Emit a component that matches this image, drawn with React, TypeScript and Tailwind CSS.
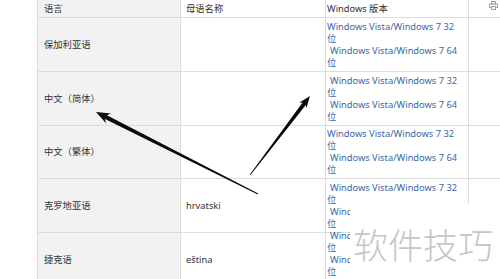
import React from "react";

type Pt = [number, number];

// Tapered arrow: thin at the tail, widening toward a solid head.
function arrowPoints(tail: Pt, tip: Pt, tailW: number, neckW: number, headLen: number, headW: number): string {
  const dx = tip[0] - tail[0];
  const dy = tip[1] - tail[1];
  const len = Math.hypot(dx, dy);
  const ux = dx / len;
  const uy = dy / len;
  const nx = -uy;
  const ny = ux;
  const bx = tip[0] - ux * headLen;
  const by = tip[1] - uy * headLen;
  const nbx = tip[0] - ux * headLen * 0.8;
  const nby = tip[1] - uy * headLen * 0.8;
  const p = (x: number, y: number) => `${x.toFixed(1)},${y.toFixed(1)}`;
  return [
    p(tail[0] + nx * tailW / 2, tail[1] + ny * tailW / 2),
    p(nbx + nx * neckW / 2, nby + ny * neckW / 2),
    p(bx + nx * headW / 2, by + ny * headW / 2),
    p(tip[0], tip[1]),
    p(bx - nx * headW / 2, by - ny * headW / 2),
    p(nbx - nx * neckW / 2, nby - ny * neckW / 2),
    p(tail[0] - nx * tailW / 2, tail[1] - ny * tailW / 2),
  ].join(" ");
}

const font = "font-['Noto_Sans','Noto_Sans_CJK_SC',sans-serif]";

type Row = {
  lang: string;
  native: string;
  versions: { text: string; indent?: boolean }[];
  h: string;
};

const W32 = "Windows Vista/Windows 7 32";
const W64 = "Windows Vista/Windows 7 64";

const rows: Row[] = [
  {
    lang: "保加利亚语",
    native: "",
    h: "h-[54px]",
    versions: [{ text: W32 }, { text: "位" }, { text: W64, indent: true }, { text: "位" }],
  },
  {
    lang: "中文（简体）",
    native: "",
    h: "h-[54px]",
    versions: [{ text: W32, indent: true }, { text: "位" }, { text: W64, indent: true }, { text: "位" }],
  },
  {
    lang: "中文（繁体）",
    native: "",
    h: "h-[53px]",
    versions: [{ text: W32 }, { text: "位" }, { text: W64, indent: true }, { text: "位" }],
  },
  {
    lang: "克罗地亚语",
    native: "hrvatski",
    h: "h-[54px]",
    versions: [{ text: W32, indent: true }, { text: "位" }, { text: W64, indent: true }, { text: "位" }],
  },
  {
    lang: "捷克语",
    native: "eština",
    h: "h-[54px]",
    versions: [
      { text: W32, indent: true },
      { text: "位" },
      { text: W64, indent: true },
      { text: "位" },
      { text: "Windows 8" },
    ],
  },
];

export default function App() {
  return (
    <div className={`relative w-[500px] h-[279px] overflow-hidden bg-white ${font} text-[9.3px] text-[#333]`}>
      <div className="pl-[37px]">
        {/* header row */}
        <div className="flex h-[18px] border-b border-[#dcdcdc]">
          <div className="w-[143px] bg-[#f2f2f2] border-l border-[#dcdcdc] pl-[6px] flex items-center">
            <div className="h-[12px] leading-[12px]">语言</div>
          </div>
          <div className="w-[145px] border-l border-[#dcdcdc] pl-[5px] flex items-center">
            <div className="h-[12px] leading-[12px]">母语名称</div>
          </div>
          <div className="w-[144px] border-l border-r border-[#dcdcdc] pl-[1px] flex items-center">
            <div className="h-[12px] leading-[12px]">Windows 版本</div>
          </div>
        </div>
        {rows.map((r, i) => (
          <div key={i} className={`flex ${r.h} border-b border-[#dcdcdc]`}>
            <div className="w-[143px] bg-[#f2f2f2] border-l border-[#dcdcdc] pl-[6px] flex items-center">
              <div className="h-[12px] leading-[12px]">{r.lang}</div>
            </div>
            <div className="w-[145px] border-l border-[#dcdcdc] pl-[5px] flex items-center">
              <div className="h-[12px] leading-[12px]">{r.native}</div>
            </div>
            <div className="w-[144px] border-l border-r border-[#dcdcdc] pl-[1px] flex flex-col justify-center text-[#3a67a6] whitespace-nowrap">
              {r.versions.map((v, j) => (
                <div key={j} className={`h-[12px] shrink-0 leading-[12px] ${v.indent ? "pl-[3px]" : ""}`}>
                  {v.text}
                </div>
              ))}
            </div>
          </div>
        ))}
      </div>

      {/* print icon */}
      <svg className="absolute left-[489px] top-[1px]" width="9" height="9" viewBox="0 0 9 9" fill="none" stroke="#9aa3b5" strokeWidth="1">
        <rect x="2.5" y="0.5" width="4" height="2.5" />
        <rect x="0.5" y="3" width="8" height="3.5" />
        <rect x="2.5" y="5.5" width="4" height="3" fill="white" />
      </svg>

      {/* annotation arrows */}
      <svg className="absolute left-0 top-0" width="500" height="279" viewBox="0 0 500 279">
        <polygon points={arrowPoints([258, 194], [96, 112], 0.8, 4.2, 14, 11)} fill="#0a0a0a" />
        <polygon points={arrowPoints([250, 175], [310, 96], 0.8, 4, 12, 9)} fill="#0a0a0a" />
      </svg>

      {/* watermark */}
      <div className="absolute left-[350px] top-[204px] right-0 bottom-0 bg-white flex items-center pl-[3px]">
        <span className="font-['Noto_Sans_CJK_SC',sans-serif] text-[35px] leading-none text-[#c6c6c6] font-light pt-[4px]">
          软件技巧
        </span>
      </div>
    </div>
  );
}
